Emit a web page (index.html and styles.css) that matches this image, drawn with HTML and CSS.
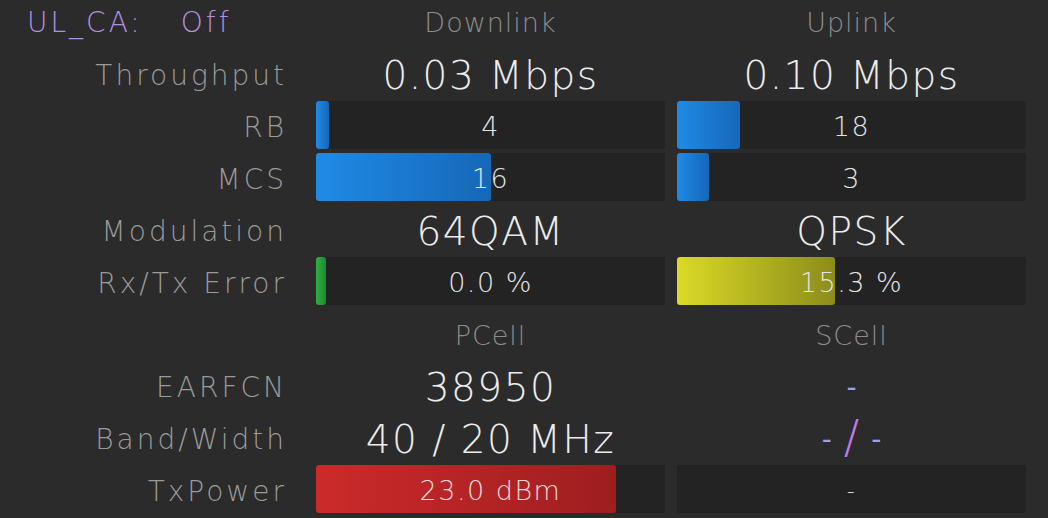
FILE: index.html
```html
<!DOCTYPE html>
<html>
<head>
<meta charset="utf-8">
<link rel="stylesheet" href="styles.css">
</head>
<body>
<div class="panel">
  <div class="label head-ca"><span class="ca-key">UL_CA:</span><span class="ca-val">Off</span></div>
  <div class="cell colhead top">Downlink</div>
  <div class="cell colhead top">Uplink</div>

  <div class="label">Throughput</div>
  <div class="cell big">0.03 Mbps</div>
  <div class="cell big">0.10 Mbps</div>

  <div class="label">RB</div>
  <div class="cell"><div class="track"><div class="fill blue" style="width:13px"></div><span class="val">4</span></div></div>
  <div class="cell"><div class="track"><div class="fill blue" style="width:63px"></div><span class="val">18</span></div></div>

  <div class="label">MCS</div>
  <div class="cell"><div class="track"><div class="fill blue" style="width:175px"></div><span class="val">16</span></div></div>
  <div class="cell"><div class="track"><div class="fill blue" style="width:32px"></div><span class="val">3</span></div></div>

  <div class="label">Modulation</div>
  <div class="cell big">64QAM</div>
  <div class="cell big">QPSK</div>

  <div class="label">Rx/Tx Error</div>
  <div class="cell"><div class="track"><div class="fill green" style="width:10px"></div><span class="val">0.0 %</span></div></div>
  <div class="cell"><div class="track"><div class="fill yellow" style="width:158px"></div><span class="val">15.3 %</span></div></div>

  <div class="label"></div>
  <div class="cell colhead">PCell</div>
  <div class="cell colhead">SCell</div>

  <div class="label">EARFCN</div>
  <div class="cell big">38950</div>
  <div class="cell dash">-</div>

  <div class="label">Band/Width</div>
  <div class="cell big">40 / 20 MHz</div>
  <div class="cell dash">- <span class="slash">/</span> -</div>

  <div class="label">TxPower</div>
  <div class="cell"><div class="track"><div class="fill red" style="width:300px"></div><span class="val redval">23.0 dBm</span></div></div>
  <div class="cell"><div class="track"><span class="val small">-</span></div></div>
</div>
</body>
</html>
```
FILE: styles.css
```css
html, body {
  margin: 0;
  padding: 0;
  background: #2b2b2b;
  width: 1048px;
  height: 518px;
  overflow: hidden;
}
body {
  font-family: "DejaVu Sans", "Noto Sans", sans-serif;
  color: #e6e6e6;
}
.panel {
  display: grid;
  grid-template-columns: 304px 349px 349px;
  grid-template-rows: 47px repeat(9, 52px);
  column-gap: 12px;
}
.label {
  display: flex;
  align-items: center;
  justify-content: flex-end;
  padding: 4px 17px 0 0;
  font-size: 28px;
  font-weight: 200;
  color: #9a9a9a;
  letter-spacing: 3px;
}
.head-ca {
  justify-content: flex-start;
  padding: 0 0 3px 27px;
  color: #b48fe0;
  gap: 38px;
}
.cell {
  display: flex;
  align-items: center;
  justify-content: center;
}
.colhead {
  font-size: 27px;
  font-weight: 200;
  color: #8c8c8c;
  letter-spacing: 1px;
  padding-top: 4px;
}
.colhead.top {
  padding-top: 0;
  padding-bottom: 2px;
}
.big {
  font-size: 39px;
  font-weight: 200;
  color: #ececec;
  letter-spacing: 1.5px;
  padding-top: 4px;
}
.track {
  position: relative;
  width: 100%;
  height: 48px;
  background: #232323;
  border-radius: 2px;
  display: flex;
  align-items: center;
  justify-content: center;
}
.fill {
  position: absolute;
  left: 0;
  top: 0;
  bottom: 0;
  border-radius: 3px;
}
.blue { background: linear-gradient(90deg, #1f8be6, #1667b8); }
.green { background: linear-gradient(90deg, #2fae40, #1e8a30); }
.yellow { background: linear-gradient(90deg, #dada26, #8c8c1c); }
.red { background: linear-gradient(90deg, #cc2a2a, #9e1e20); }
.val {
  position: relative;
  font-size: 27px;
  font-weight: 200;
  color: #e4e4e4;
  letter-spacing: 1.5px;
  padding-top: 3px;
}
.redval { color: #f2d8d8; }
.small { font-size: 22px; }
.dash {
  font-size: 28px;
  color: #9aa2ea;
  gap: 12px;
  padding-top: 4px;
}
.slash {
  color: #c47ae8;
  font-size: 46px;
  font-weight: 200;
  line-height: 1;
  margin-top: -4px;
}
```
